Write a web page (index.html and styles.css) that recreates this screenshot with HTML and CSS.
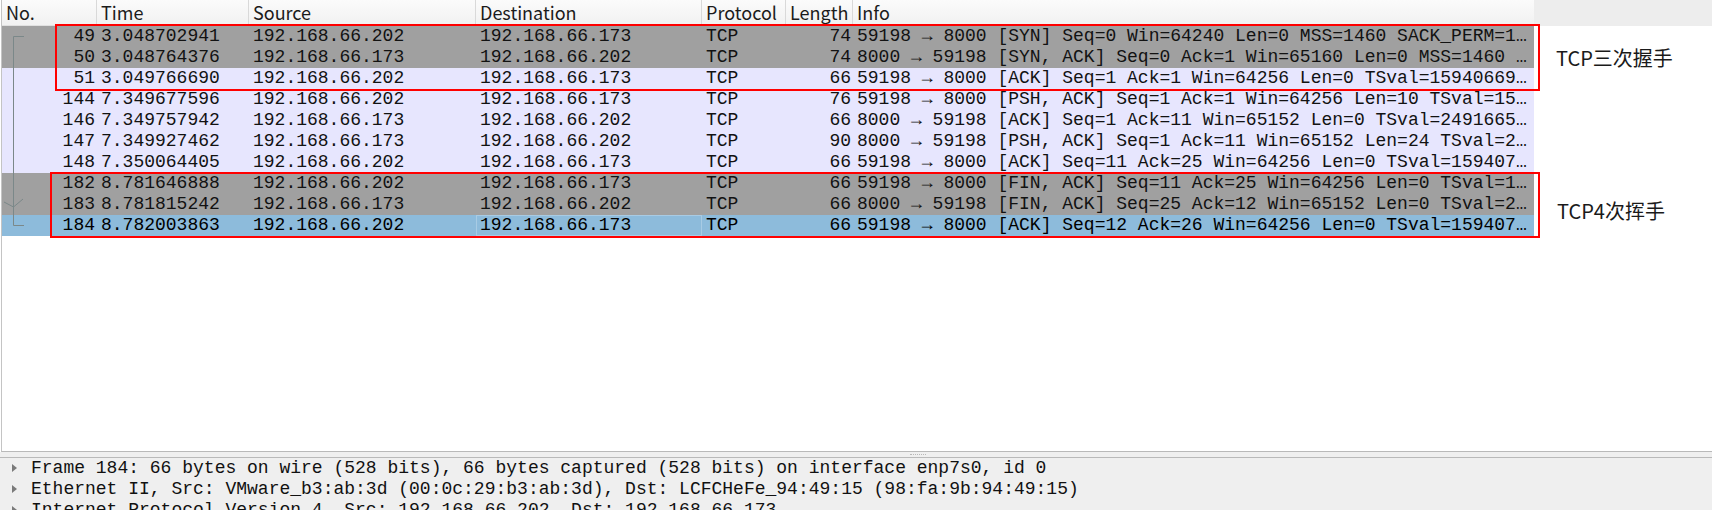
FILE: index.html
```html
<!DOCTYPE html>
<html>
<head>
<meta charset="utf-8">
<link rel="stylesheet" href="styles.css">
</head>
<body>
<div class="app">
  <div class="list">
    <div class="hdr">
      <div class="hcells">
        <div class="hcell">No.</div>
        <div class="hcell">Time</div>
        <div class="hcell">Source</div>
        <div class="hcell">Destination</div>
        <div class="hcell">Protocol</div>
        <div class="hcell">Length</div>
        <div class="hcell last">Info</div>
      </div>
      <div class="hfill"></div>
    </div>
    <div class="rows">
      <div class="row syn"><span class="r">49</span><span>3.048702941</span><span>192.168.66.202</span><span>192.168.66.173</span><span>TCP</span><span class="r">74</span><span>59198 → 8000 [SYN] Seq=0 Win=64240 Len=0 MSS=1460 SACK_PERM=1…</span></div>
      <div class="row syn"><span class="r">50</span><span>3.048764376</span><span>192.168.66.173</span><span>192.168.66.202</span><span>TCP</span><span class="r">74</span><span>8000 → 59198 [SYN, ACK] Seq=0 Ack=1 Win=65160 Len=0 MSS=1460 …</span></div>
      <div class="row tcp"><span class="r">51</span><span>3.049766690</span><span>192.168.66.202</span><span>192.168.66.173</span><span>TCP</span><span class="r">66</span><span>59198 → 8000 [ACK] Seq=1 Ack=1 Win=64256 Len=0 TSval=15940669…</span></div>
      <div class="row tcp"><span class="r">144</span><span>7.349677596</span><span>192.168.66.202</span><span>192.168.66.173</span><span>TCP</span><span class="r">76</span><span>59198 → 8000 [PSH, ACK] Seq=1 Ack=1 Win=64256 Len=10 TSval=15…</span></div>
      <div class="row tcp"><span class="r">146</span><span>7.349757942</span><span>192.168.66.173</span><span>192.168.66.202</span><span>TCP</span><span class="r">66</span><span>8000 → 59198 [ACK] Seq=1 Ack=11 Win=65152 Len=0 TSval=2491665…</span></div>
      <div class="row tcp"><span class="r">147</span><span>7.349927462</span><span>192.168.66.173</span><span>192.168.66.202</span><span>TCP</span><span class="r">90</span><span>8000 → 59198 [PSH, ACK] Seq=1 Ack=11 Win=65152 Len=24 TSval=2…</span></div>
      <div class="row tcp"><span class="r">148</span><span>7.350064405</span><span>192.168.66.202</span><span>192.168.66.173</span><span>TCP</span><span class="r">66</span><span>59198 → 8000 [ACK] Seq=11 Ack=25 Win=64256 Len=0 TSval=159407…</span></div>
      <div class="row syn"><span class="r">182</span><span>8.781646888</span><span>192.168.66.202</span><span>192.168.66.173</span><span>TCP</span><span class="r">66</span><span>59198 → 8000 [FIN, ACK] Seq=11 Ack=25 Win=64256 Len=0 TSval=1…</span></div>
      <div class="row syn"><span class="r">183</span><span>8.781815242</span><span>192.168.66.173</span><span>192.168.66.202</span><span>TCP</span><span class="r">66</span><span>8000 → 59198 [FIN, ACK] Seq=25 Ack=12 Win=65152 Len=0 TSval=2…</span></div>
      <div class="row sel"><span class="r">184</span><span>8.782003863</span><span>192.168.66.202</span><span class="focus">192.168.66.173</span><span>TCP</span><span class="r">66</span><span>59198 → 8000 [ACK] Seq=12 Ack=26 Win=64256 Len=0 TSval=159407…</span></div>
    </div>
  </div>
  <div class="split"><div class="grip"></div></div>
  <div class="detail">
    <div class="dline"><span class="twisty"></span><span>Frame 184: 66 bytes on wire (528 bits), 66 bytes captured (528 bits) on interface enp7s0, id 0</span></div>
    <div class="dline"><span class="twisty"></span><span>Ethernet II, Src: VMware_b3:ab:3d (00:0c:29:b3:ab:3d), Dst: LCFCHeFe_94:49:15 (98:fa:9b:94:49:15)</span></div>
    <div class="dline"><span class="twisty"></span><span>Internet Protocol Version 4, Src: 192.168.66.202, Dst: 192.168.66.173</span></div>
  </div>

  <svg class="conv" width="30" height="240" viewBox="0 0 30 240">
    <path d="M24 36.5 H13.5 V225.5 H24" fill="none" stroke="#7b8889" stroke-width="1"/>
    <path d="M4 202 L13.5 207 L23 199" fill="none" stroke="#7b8889" stroke-width="1"/>
  </svg>
  <div class="redbox box1"></div>
  <div class="redbox box2"></div>
  <div class="note note1">TCP三次握手</div>
  <div class="note note2">TCP4次挥手</div>
</div>
</body>
</html>
```

FILE: styles.css
```css
* { box-sizing: border-box; }
html, body { margin: 0; padding: 0; }
body {
  width: 1712px;
  height: 510px;
  overflow: hidden;
  background: #ffffff;
  font-family: "Liberation Mono", monospace;
}
.app {
  position: relative;
  display: flex;
  flex-direction: column;
  height: 510px;
}
.list {
  flex: none;
  height: 452px;
  margin-left: 1px;
  border-left: 1px solid #c4c4c4;
  border-bottom: 1px solid #b9b9b9;
  background: #ffffff;
}
.hdr {
  display: flex;
  height: 26px;
}
.hcells {
  display: grid;
  grid-template-columns: 95px 152px 227px 226px 84px 67px 681px;
  width: 1532px;
  background: linear-gradient(#fbfbfb, #f1f1f1);
  border-bottom: 1px solid #e0e0e0;
}
.hcell {
  font-family: "Noto Sans CJK SC", "Noto Sans", sans-serif;
  font-size: 18px;
  line-height: 25px;
  color: #1b1b1b;
  padding-left: 4px;
  border-right: 1px solid #d9d9d9;
  white-space: nowrap;
}
.hcell.last { border-right: none; }
.hfill {
  flex: 1;
  background: #ededed;
}
.row {
  display: grid;
  grid-template-columns: 95px 152px 227px 226px 84px 67px 681px;
  width: 1532px;
  height: 21px;
  line-height: 21px;
  font-size: 18px;
  color: #121212;
  white-space: nowrap;
}
.row > span {
  padding-left: 4px;
}
.row > span.r {
  text-align: right;
  padding: 0 2px 0 0;
}
.syn { background: #a0a0a0; }
.tcp { background: #e7e6fe; }
.sel { background: #8dbbdb; color: #000; }
.focus { box-shadow: inset 0 0 0 1px #a8cbe4; }

.split {
  flex: none;
  height: 5px;
  background: #efefef;
  position: relative;
}
.grip {
  position: absolute;
  left: 910px;
  top: 2px;
  width: 16px;
  height: 1px;
  border-top: 1px dotted #b8b8b8;
}
.detail {
  flex: 1;
  border-top: 1px solid #b9b9b9;
  background: #efefef;
  overflow: hidden;
}
.dline {
  display: flex;
  height: 21px;
  line-height: 21px;
  font-size: 18px;
  color: #111111;
  white-space: nowrap;
}
.twisty {
  flex: none;
  width: 31px;
  position: relative;
}
.twisty::before {
  content: "";
  position: absolute;
  left: 12px;
  top: 6px;
  border-left: 5px solid #7a7a7a;
  border-top: 4.5px solid transparent;
  border-bottom: 4.5px solid transparent;
}

.conv {
  position: absolute;
  left: 0;
  top: 0;
}
.redbox {
  position: absolute;
  border: 2px solid #ff0000;
}
.box1 { left: 55px; top: 24px; width: 1485px; height: 67px; }
.box2 { left: 50px; top: 172px; width: 1490px; height: 66px; }
.note {
  position: absolute;
  font-family: "Noto Sans CJK SC", "Noto Sans", sans-serif;
  font-size: 20px;
  line-height: 28px;
  color: #1a1a1a;
  white-space: nowrap;
}
.note1 { left: 1556px; top: 44px; }
.note2 { left: 1557px; top: 197px; }
```
